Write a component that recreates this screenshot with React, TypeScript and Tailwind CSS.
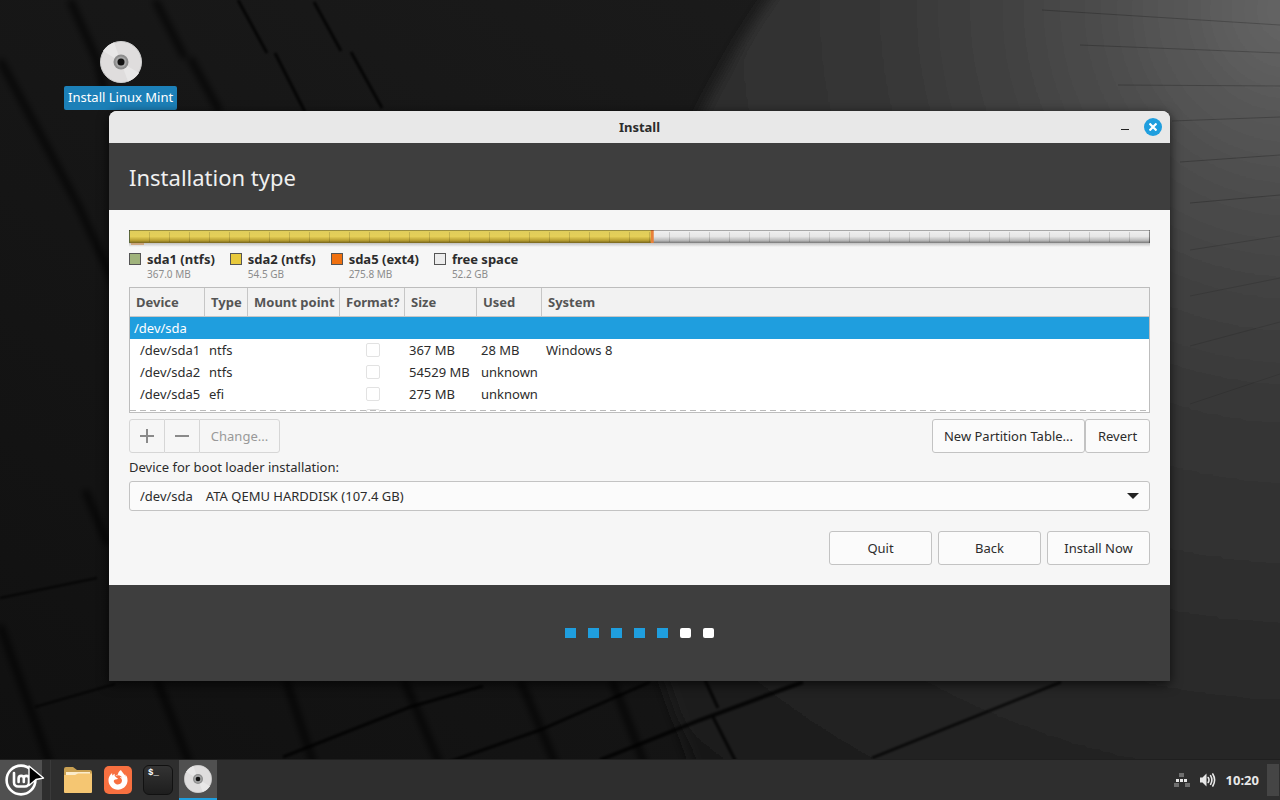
import { FaFirefoxBrowser } from 'react-icons/fa';

const partitions = [
  { name: 'sda1 (ntfs)', size: '367.0 MB', color: 'bg-[#a0b37c]' },
  { name: 'sda2 (ntfs)', size: '54.5 GB', color: 'bg-[#e8c93c]' },
  { name: 'sda5 (ext4)', size: '275.8 MB', color: 'bg-[#f0700f]' },
  { name: 'free space', size: '52.2 GB', color: 'bg-[#ececec]' }
];

const columns = [
  { title: 'Device', width: 'w-[75px]' },
  { title: 'Type', width: 'w-[43px]' },
  { title: 'Mount point', width: 'w-[92px]' },
  { title: 'Format?', width: 'w-[65px]' },
  { title: 'Size', width: 'w-[72px]' },
  { title: 'Used', width: 'w-[65px]' },
  { title: 'System', width: '' }
];

const rows = [
  { device: '/dev/sda1', type: 'ntfs', size: '367 MB', used: '28 MB', system: 'Windows 8' },
  { device: '/dev/sda2', type: 'ntfs', size: '54529 MB', used: 'unknown', system: '' },
  { device: '/dev/sda5', type: 'efi', size: '275 MB', used: 'unknown', system: '' }
];

const button = 'h-[34px] rounded-[3px] border border-[#c3c3c3] bg-[#fbfbfb] whitespace-nowrap';

function Wallpaper() {
  return (
    <svg className="absolute inset-0 h-full w-full" viewBox="0 0 1280 800" preserveAspectRatio="xMidYMid slice" aria-hidden="true">
      <defs>
        <linearGradient id="dark" x1="0" y1="1" x2="1" y2="0">
          <stop offset="0" stopColor="#101010" />
          <stop offset="1" stopColor="#1d1d1d" />
        </linearGradient>
        <radialGradient id="light" gradientUnits="userSpaceOnUse" cx="1290" cy="10" r="1000">
          <stop offset="0" stopColor="#666" />
          <stop offset="0.12" stopColor="#555" />
          <stop offset="0.25" stopColor="#454545" />
          <stop offset="0.4" stopColor="#373737" />
          <stop offset="0.6" stopColor="#2d2d2d" />
          <stop offset="0.85" stopColor="#202020" />
          <stop offset="1" stopColor="#151515" />
        </radialGradient>
        <filter id="soft" x="-10%" y="-10%" width="120%" height="120%">
          <feGaussianBlur stdDeviation="7" />
        </filter>
        <filter id="edge" x="-20%" y="-20%" width="140%" height="140%">
          <feGaussianBlur stdDeviation="3" />
        </filter>
        <filter id="seam" x="-20%" y="-20%" width="140%" height="140%">
          <feGaussianBlur stdDeviation="1" />
        </filter>
      </defs>
      <rect width="1280" height="800" fill="url(#dark)" />
      <path d="M790 -30 C745 30 712 90 696 125 L600 500 L720 840 H1320 V-30 Z" fill="url(#light)" filter="url(#soft)" />
      <g fill="none" stroke="#000" strokeOpacity="0.65" strokeWidth="7" filter="url(#edge)">
        <path d="M70 0 L97 60 L104 90" />
        <path d="M155 0 L185 58 M190 58 L220 112" />
        <path d="M0 60 L40 134 L78 205 L122 300" />
        <path d="M0 625 L32 713 L50 765" />
        <path d="M85 490 L108 545" />
        <path d="M157 680 L190 765" />
        <path d="M286 680 L314 765" />
        <path d="M404 680 L440 765" />
        <path d="M520 680 L556 765" />
        <path d="M612 680 L645 765" />
      </g>
      <g fill="none" stroke="#030303" strokeOpacity="0.8" strokeWidth="3" filter="url(#seam)">
        <path d="M238 0 L267 53 M275 53 L305 112" />
        <path d="M314 2 L341 51 M351 52 L382 108" />
        <path d="M0 598 L97 578" strokeWidth="2" />
        <path d="M35 707 L115 684" strokeWidth="2" />
        <path d="M283 757 L410 707 L483 686" />
        <path d="M440 765 L540 730 L650 682" />
        <path d="M600 760 L700 720 L803 682" strokeWidth="4" />
        <path d="M705 680 L718 708 M713 717 L736 762" />
        <path d="M872 758 L1061 682" strokeWidth="2.5" />
      </g>
      <g fill="none" stroke="#000" strokeOpacity="0.22" strokeWidth="1">
        <path d="M1042 10 L1280 25" />
        <path d="M1080 45 L1280 53" />
        <path d="M1118 85 L1280 86" />
        <path d="M1172 121 L1280 117" />
        <path d="M1180 162 L1280 155" />
        <path d="M1190 203 L1280 195" />
        <path d="M1190 250 L1280 236" strokeOpacity="0.15" />
        <path d="M1190 296 L1280 278" strokeOpacity="0.12" />
        <path d="M1190 346 L1280 322" strokeOpacity="0.12" />
        <path d="M1190 404 L1280 374" strokeOpacity="0.1" />
      </g>
    </svg>
  );
}

function Disc({ className }: { className: string }) {
  return (
    <svg className={className} viewBox="0 0 42 42" aria-hidden="true">
      <circle cx="21" cy="21" r="20.5" fill="#dfdddd" stroke="#cfcfcf" />
      <path d="M21 21 L3 10 A21 21 0 0 1 14 1.5 Z M21 21 L39 32 A21 21 0 0 1 28 40.5 Z" fill="#e8e7e7" />
      <circle cx="21" cy="21" r="7.5" fill="#8d8d8d" />
      <circle cx="21" cy="21" r="5.5" fill="#a5a5a5" />
      <circle cx="21" cy="21" r="3.5" fill="#111" />
    </svg>
  );
}

function UsageBar() {
  return (
    <svg className="block h-[18px] w-full" aria-hidden="true">
      <defs>
        <linearGradient id="used" x1="0" y1="0" x2="0" y2="1">
          <stop offset="0" stopColor="#dfcd5c" />
          <stop offset="0.5" stopColor="#e5cf58" />
          <stop offset="0.8" stopColor="#b89f32" />
          <stop offset="1" stopColor="#75631d" />
        </linearGradient>
        <linearGradient id="free" x1="0" y1="0" x2="0" y2="1">
          <stop offset="0" stopColor="#f1f1f1" />
          <stop offset="0.5" stopColor="#e6e6e6" />
          <stop offset="0.8" stopColor="#b9b9b9" />
          <stop offset="1" stopColor="#777" />
        </linearGradient>
        <linearGradient id="glow" x1="0" y1="0" x2="0" y2="1">
          <stop offset="0" stopColor="#000" stopOpacity="0.22" />
          <stop offset="1" stopColor="#000" stopOpacity="0" />
        </linearGradient>
        <pattern id="ticks" width="20" height="14" patternUnits="userSpaceOnUse">
          <path d="M0.5 2 V12" stroke="#000" strokeOpacity="0.14" />
        </pattern>
      </defs>
      <rect width="100%" height="13" fill="url(#free)" />
      <rect width="51.3%" height="13" fill="url(#used)" />
      <rect width="1" height="13" fill="#8fa05c" />
      <rect x="51.1%" width="3" height="13" fill="#e8813a" />
      <rect x="20" width="100%" height="13" fill="url(#ticks)" />
      <rect width="100%" height="1" fill="#000" fillOpacity="0.3" />
      <rect width="1" height="13" fill="#000" fillOpacity="0.35" />
      <rect x="99.9%" width="1" height="13" fill="#000" fillOpacity="0.35" />
      <rect y="13" width="100%" height="4" fill="url(#glow)" />
      <rect x="2" y="13" width="13" height="2" fill="#c98a4a" fillOpacity="0.6" />
    </svg>
  );
}

function FormatBox({ label }: { label: string }) {
  return (
    <input
      type="checkbox"
      aria-label={label}
      className="mx-auto block size-[14px] appearance-none rounded-[2px] border border-[#e2e2e2] bg-white"
    />
  );
}

function PartitionTable() {
  return (
    <div className="relative mt-[6px] h-[126px] overflow-hidden border border-[#bdbdbd] bg-white">
      <table className="w-full table-fixed border-separate border-spacing-0 text-left">
        <thead>
          <tr className="h-[29px] bg-[#f2f2f2] text-[#555]">
            {columns.map((column) => (
              <th key={column.title} className={`${column.width} border-b border-[#c6c6c6] p-0 font-bold whitespace-nowrap`}>
                <div className={column.title === 'System' ? 'pl-[6px] leading-7' : 'border-r border-[#c6c6c6] pl-[6px] leading-7'}>
                  {column.title}
                </div>
              </th>
            ))}
          </tr>
        </thead>
        <tbody className="whitespace-nowrap">
          <tr className="h-[22px] bg-[#1f9ede] text-white">
            <td className="px-1" colSpan={7}>/dev/sda</td>
          </tr>
          {rows.map((row) => (
            <tr key={row.device} className="h-[22px]">
              <td className="pl-[10px]">{row.device}</td>
              <td className="pl-1">{row.type}</td>
              <td />
              <td>
                <FormatBox label={`Format ${row.device}`} />
              </td>
              <td className="pl-1">{row.size}</td>
              <td className="pl-1">{row.used}</td>
              <td className="pl-1">{row.system}</td>
            </tr>
          ))}
          <tr className="h-[22px]">
            <td colSpan={3} className="pt-[5px] pl-3 align-top">
              <span className="block h-px w-1 bg-[#666]" />
            </td>
            <td>
              <FormatBox label="Format" />
            </td>
            <td colSpan={3} />
          </tr>
        </tbody>
      </table>
      <svg className="absolute inset-x-0 bottom-px h-px w-full" aria-hidden="true">
        <line x1="0" y1="0.5" x2="100%" y2="0.5" stroke="#bbb" strokeDasharray="6 4" />
      </svg>
    </div>
  );
}

function Installer() {
  return (
    <main className="absolute top-[111px] right-[110px] left-[109px] rounded-t-lg bg-[#f6f6f6] shadow-[0_3px_12px_rgba(0,0,0,0.7)]">
      <header className="flex h-8 items-center rounded-t-lg bg-[#e8e8e8] px-2">
        <span className="w-12" />
        <h1 className="flex-1 text-center font-bold">Install</h1>
        <div className="flex w-12 items-center justify-end gap-[11px]">
          <button aria-label="Minimize" className="flex h-4 w-4 items-center justify-center">
            <span className="mt-1 h-px w-2 bg-[#222]" />
          </button>
          <button aria-label="Close" className="flex size-[18px] items-center justify-center rounded-full bg-[#1f9ede]">
            <svg className="size-2" viewBox="0 0 8 8" stroke="#fff" strokeWidth="2.2">
              <path d="M0.5 0.5 L7.5 7.5 M7.5 0.5 L0.5 7.5" />
            </svg>
          </button>
        </div>
      </header>
      <div className="flex h-[67px] items-center bg-[#3e3e3e] px-5">
        <h2 className="text-[22px] leading-8 text-[#f0f0f0]">Installation type</h2>
      </div>

      <div className="p-5">
        <UsageBar />
        <ul className="mt-[3px] flex gap-[15px]">
          {partitions.map((partition) => (
            <li key={partition.name} className="flex gap-[6px]">
              <span className={`mt-[2px] size-3 border border-[#555] ${partition.color}`} />
              <div>
                <p className="leading-4 font-bold">{partition.name}</p>
                <p className="text-[10px] leading-[14px] text-[#8c8c8c]">{partition.size}</p>
              </div>
            </li>
          ))}
        </ul>
        <PartitionTable />

        <div className="mt-[6px] flex justify-between">
          <div className="flex text-[#999]">
            <button disabled aria-label="Add partition" className="flex h-[34px] w-9 items-center justify-center rounded-l-[3px] border border-[#d6d6d6]">
              <svg className="size-[14px]" viewBox="0 0 14 14" stroke="#8a8a8a" strokeWidth="2">
                <path d="M7 0 V14 M0 7 H14" />
              </svg>
            </button>
            <button disabled aria-label="Remove partition" className="flex h-[34px] w-[34px] items-center justify-center border-y border-[#d6d6d6]">
              <svg className="size-[14px]" viewBox="0 0 14 14" stroke="#8a8a8a" strokeWidth="2">
                <path d="M0 7 H14" />
              </svg>
            </button>
            <button disabled className="h-[34px] w-[81px] rounded-r-[3px] border border-[#d6d6d6]">Change...</button>
          </div>
          <div className="flex">
            <button className={`${button} w-[153px]`}>New Partition Table...</button>
            <button className={`${button} w-[65px]`}>Revert</button>
          </div>
        </div>

        <label htmlFor="boot" className="mt-[6px] block leading-4">Device for boot loader installation:</label>
        <div className="relative mt-[6px]">
          <select id="boot" className="block h-[30px] w-full appearance-none rounded-[3px] border border-[#c3c3c3] bg-[#fbfbfb] px-[10px]">
            <option>{'/dev/sda\u2003ATA QEMU HARDDISK (107.4 GB)'}</option>
          </select>
          <svg className="pointer-events-none absolute top-3 right-[11px] h-[6px] w-3" viewBox="0 0 12 6" fill="#222">
            <path d="M0 0 H12 L6 6 Z" />
          </svg>
        </div>

        <div className="mt-5 flex justify-end gap-[6px]">
          <button className={`${button} w-[103px]`}>Quit</button>
          <button className={`${button} w-[103px]`}>Back</button>
          <button className={`${button} w-[103px]`}>Install Now</button>
        </div>
      </div>

      <footer className="flex h-24 items-center justify-center gap-3 bg-[#3e3e3e]">
        {[1, 2, 3, 4, 5, 6, 7].map((step) => (
          <span key={step} className={step <= 5 ? 'h-[10px] w-[11px] bg-[#1f9ede]' : 'h-[10px] w-[11px] rounded-[2px] bg-white'} />
        ))}
      </footer>
    </main>
  );
}

function Taskbar() {
  return (
    <nav className="relative mt-auto flex h-[41px] items-center border-t border-[#1f1f1f] bg-[#2e2e2e]">
      <button aria-label="Menu" className="relative flex h-full w-[42px] items-center justify-center bg-[#505050]">
        <svg className="size-8" viewBox="0 0 32 32" fill="none" stroke="#fff" strokeWidth="2.6" strokeLinecap="round">
          <circle cx="16" cy="16" r="14.4" />
          <path d="M9 9 V18.5 A4 4 0 0 0 13 22.5 H20 A4 4 0 0 0 24 18.5 V14.5 A2.6 2.6 0 0 0 18.8 14.5 V18 M18.8 18 V14.5 A2.6 2.6 0 0 0 13.6 14.5 V18" />
        </svg>
        <svg className="absolute top-[5px] left-7 h-[22px] w-[17px]" viewBox="0 0 17 22" aria-hidden="true">
          <path d="M1 1 L15.5 13 L8 14.5 L1 20.5 Z" fill="#000" stroke="#fff" strokeWidth="1.4" strokeLinejoin="round" />
        </svg>
      </button>
      <span className="ml-2 h-full w-px bg-[#3a3a3a]" />
      <div className="ml-2 flex h-full items-center">
        <button aria-label="Files" className="flex h-full w-[38px] items-center justify-center">
          <svg className="h-[26px] w-7" viewBox="0 0 28 26">
            <path d="M0 2 Q0 0 2 0 H9 L13 3 H26 Q28 3 28 5 V14 H0 Z" fill="#c9a052" />
            <path d="M2 5 H26 V9 H2 Z" fill="#fbeccb" />
            <path d="M0 8 H11 L14 6.5 H28 V25 Q28 26 27 26 H1 Q0 26 0 25 Z" fill="#f5c672" />
          </svg>
        </button>
        <button aria-label="Firefox" className="ml-[2px] flex h-full w-[38px] items-center justify-center">
          <span className="flex size-7 items-center justify-center rounded-[5px] bg-[#f87040]">
            <FaFirefoxBrowser className="size-5 text-white" />
          </span>
        </button>
        <button aria-label="Terminal" className="ml-[2px] flex h-full w-[38px] items-center justify-center">
          <span className="h-[30px] w-[30px] rounded-[6px] border border-[#111] bg-linear-to-b from-[#333] to-[#1e1e1e] pl-1 text-left font-['Liberation_Mono'] text-[9px] leading-[14px] font-bold text-white">
            $_
          </span>
        </button>
        <button aria-label="Installer" className="ml-[2px] flex h-full w-[38px] items-center justify-center border-b-2 border-[#1f9ede] bg-[#505050]">
          <Disc className="size-7" />
        </button>
      </div>
      <div className="ml-auto flex h-full items-center text-[#e8e8e8]">
        <svg className="h-4 w-4" viewBox="0 0 16 16" aria-hidden="true">
          <path d="M5 1 H10 V5 H5 Z M0 11 H5 V15 H0 Z M11 11 H16 V15 H11 Z" fill="#6e6e6e" />
          <path d="M2 7 H5 V10 H2 Z M6 7 H9 V10 H6 Z M10 7 H13 V10 H10 Z" fill="#e8e8e8" />
        </svg>
        <svg className="ml-[10px] h-4 w-4" viewBox="0 0 16 16" fill="none" stroke="#e8e8e8" strokeWidth="1.6" strokeLinecap="round" aria-hidden="true">
          <path d="M0 5.5 H2.5 L6.5 1.5 V14.5 L2.5 10.5 H0 Z" fill="#e8e8e8" stroke="none" />
          <path d="M8.2 5.5 Q9.8 8 8.2 10.5 M10.6 3.6 Q13.2 8 10.6 12.4 M12.8 2 Q16.4 8 12.8 14" />
        </svg>
        <time className="ml-[10px] font-bold">10:20</time>
        <span className="mr-px ml-2 h-8 w-3 bg-[#454545]" />
      </div>
    </nav>
  );
}

export default function App() {
  return (
    <div className="relative flex min-h-screen flex-col overflow-hidden bg-[#121212] font-['Noto_Sans','Open_Sans',sans-serif] text-[13px] leading-5 text-[#2c2c2c]">
      <Wallpaper />
      <a href="#install" className="absolute top-[41px] left-16 flex flex-col items-center gap-[3px] text-white">
        <Disc className="size-[42px]" />
        <span className="rounded-[2px] bg-[#1c80b8] px-1 pb-[2px] leading-[22px]">Install Linux Mint</span>
      </a>
      <Installer />
      <Taskbar />
    </div>
  );
}
